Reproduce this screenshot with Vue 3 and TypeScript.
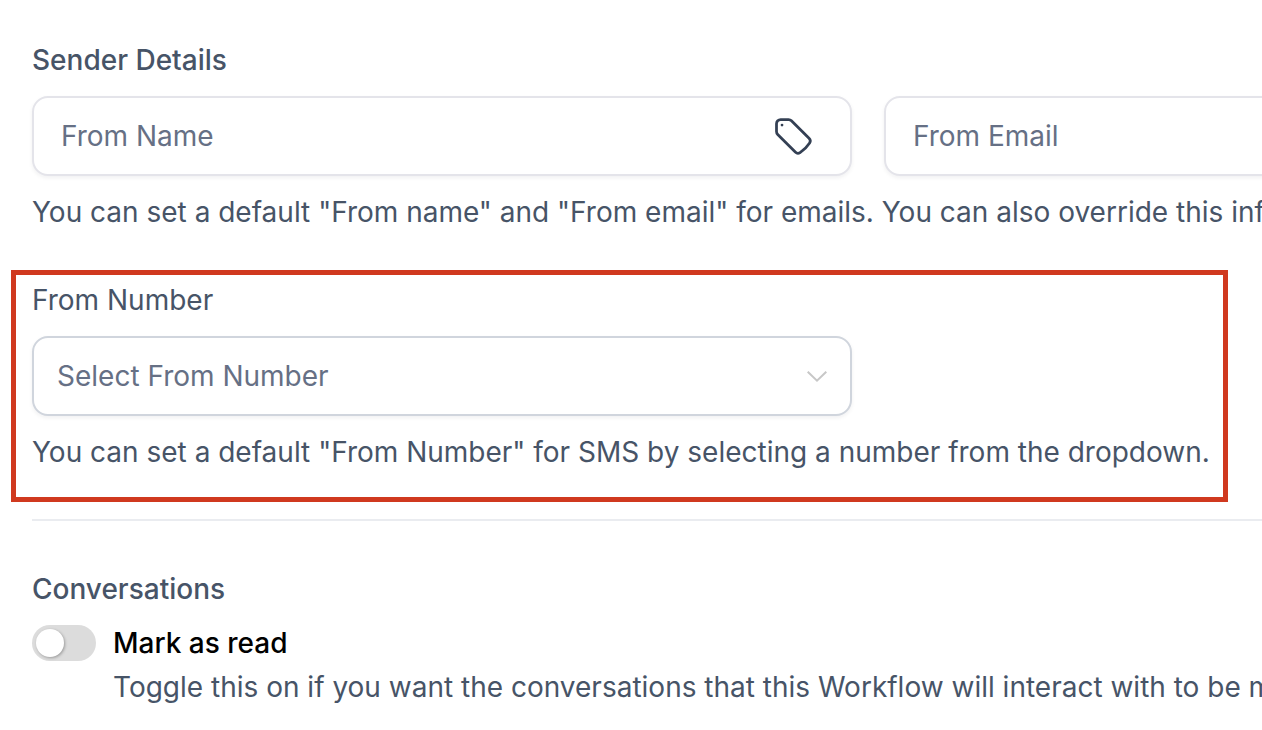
<template>
  <main class="settings">
    <section class="settings__group">
      <h2 class="settings__title">Sender Details</h2>
      <div class="settings__inputs">
        <label class="field">
          <span class="field__placeholder">From Name</span>
          <svg class="field__tag" viewBox="0 0 24 24" fill="none" stroke="currentColor" stroke-width="1.5" stroke-linecap="round" stroke-linejoin="round">
            <path d="M9.568 3H5.25A2.25 2.25 0 0 0 3 5.25v4.318c0 .597.237 1.17.659 1.591l9.581 9.581c.699.699 1.78.872 2.607.33a18.095 18.095 0 0 0 5.223-5.223c.542-.827.369-1.908-.33-2.607L11.16 3.66A2.25 2.25 0 0 0 9.568 3z" />
            <path d="M6 6h.008v.008H6V6z" />
          </svg>
        </label>
        <label class="field">
          <span class="field__placeholder">From Email</span>
        </label>
      </div>
      <p class="settings__help">{{ senderHelp }}</p>
    </section>

    <section class="settings__group settings__group--number">
      <div class="settings__highlight" />
      <h3 class="settings__label">From Number</h3>
      <div class="field field--select">
        <span class="field__placeholder">Select From Number</span>
        <svg class="field__chevron" viewBox="0 0 20 11" fill="none" stroke="currentColor" stroke-width="2">
          <path d="M0.7 0.7 10 9.6 19.3 0.7" />
        </svg>
      </div>
      <p class="settings__help">{{ numberHelp }}</p>
    </section>

    <hr class="settings__divider" />

    <section class="settings__group">
      <h2 class="settings__title">Conversations</h2>
      <div class="toggle-row">
        <span class="toggle"><span class="toggle__knob" /></span>
        <div class="toggle-row__copy">
          <div class="toggle-row__name">Mark as read</div>
          <p class="toggle-row__desc">{{ toggleHelp }}</p>
        </div>
      </div>
    </section>
  </main>
</template>

<script setup lang="ts">
const senderHelp =
  'You can set a default "From name" and "From email" for emails. You can also override this information for each action.'
const numberHelp =
  'You can set a default "From Number" for SMS by selecting a number from the dropdown.'
const toggleHelp =
  'Toggle this on if you want the conversations that this Workflow will interact with to be marked as read.'
</script>

<style scoped>
.settings {
  width: 1262px;
  height: 730px;
  box-sizing: border-box;
  padding: 40px 0 0 32px;
  overflow: hidden;
  background: #fff;
  font-family: Inter, "Noto Sans", sans-serif;
  font-size: 28px;
  line-height: 40px;
  color: #475467;
}

.settings__title,
.settings__label {
  margin: 0 0 16px;
  font-size: 28px;
  line-height: 40px;
  font-weight: 500;
  white-space: nowrap;
}

.settings__label {
  font-weight: 400;
}

.settings__inputs {
  display: flex;
  gap: 32px;
}

.settings__help {
  margin: 16px 0 0;
  white-space: nowrap;
}

.settings__group--number {
  position: relative;
  width: 1180px;
  margin-top: 48px;
}

.settings__highlight {
  position: absolute;
  top: -10px;
  left: -21px;
  width: 1217px;
  height: 232px;
  box-sizing: border-box;
  border: 5px solid #d0391f;
}

.settings__divider {
  width: 1230px;
  height: 2px;
  margin: 47px 0 48px;
  border: 0;
  background: #eaecf0;
}

.field {
  display: flex;
  flex: none;
  align-items: center;
  justify-content: space-between;
  width: 820px;
  height: 80px;
  box-sizing: border-box;
  padding: 0 36px 0 27px;
  border: 2px solid #e4e4ea;
  border-radius: 16px;
  box-shadow: 0 2px 4px rgba(16, 24, 40, 0.06);
  background: #fff;
}

.field--select {
  padding: 0 23px 0 23px;
  border-color: #d0d5dd;
}

.field__placeholder {
  color: #667085;
  white-space: nowrap;
}

.field__tag {
  width: 44px;
  height: 44px;
  margin-right: -1px;
  color: #344054;
}

.field__chevron {
  width: 20px;
  height: 11px;
  color: #c7c7c7;
}

.toggle-row {
  display: flex;
  gap: 17px;
}

.toggle {
  display: block;
  flex: none;
  width: 64px;
  height: 36px;
  margin-top: 0;
  border-radius: 18px;
  background: #dcdcdc;
}

.toggle__knob {
  display: block;
  width: 28px;
  height: 28px;
  margin: 4px;
  border-radius: 50%;
  background: #fff;
  box-shadow: 1px 1px 3px rgba(0, 0, 0, 0.3);
}

.toggle-row__copy {
  margin-top: -2px;
}

.toggle-row__name {
  color: #000;
  font-weight: 500;
}

.toggle-row__desc {
  margin: 4px 0 0;
  white-space: nowrap;
}
</style>

<style>
html,
body {
  margin: 0;
  overflow: hidden;
}
</style>
